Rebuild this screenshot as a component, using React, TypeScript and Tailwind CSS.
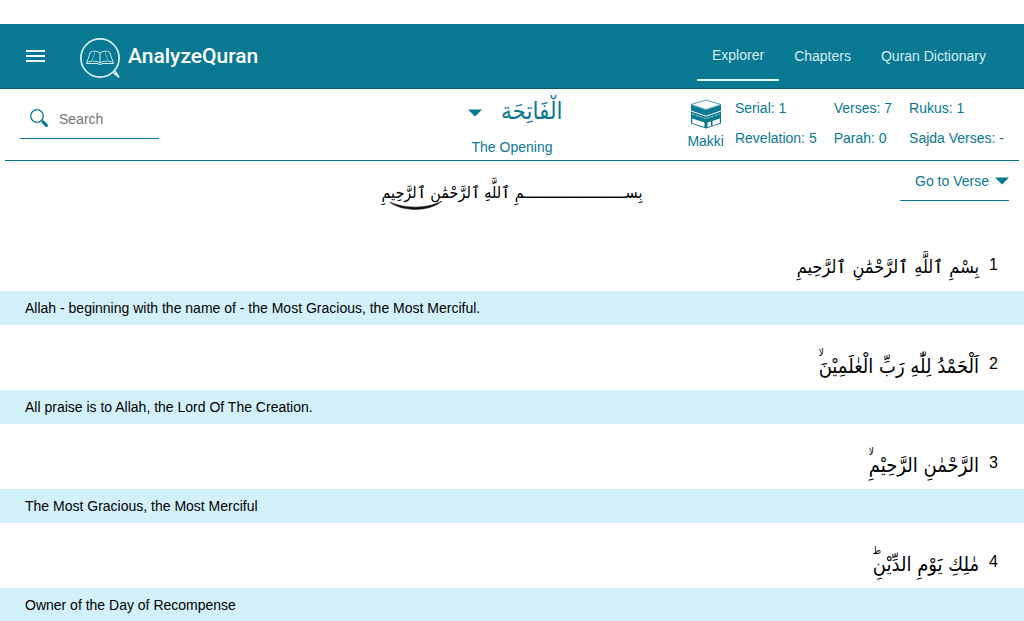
import React from "react";

const navLinks = [
  { label: "Chapters", href: "#chapters" },
  { label: "Quran Dictionary", href: "#dictionary" },
];

const facts = [
  "Serial: 1",
  "Verses: 7",
  "Rukus: 1",
  "Revelation: 5",
  "Parah: 0",
  "Sajda Verses: -",
];

const verses = [
  {
    id: 1,
    arabic: "بِسْمِ ٱللَّهِ ٱلرَّحْمَٰنِ ٱلرَّحِيمِ",
    size: "text-lg",
    english: "Allah - beginning with the name of - the Most Gracious, the Most Merciful.",
  },
  {
    id: 2,
    arabic: "اَلْحَمْدُ لِلّٰهِ رَبِّ الْعٰلَمِيْنَ",
    size: "text-xl",
    stop: "لا",
    english: "All praise is to Allah, the Lord Of The Creation.",
  },
  {
    id: 3,
    arabic: "الرَّحْمٰنِ الرَّحِيْمِ",
    size: "text-xl",
    stop: "لا",
    english: "The Most Gracious, the Most Merciful",
  },
  {
    id: 4,
    arabic: "مٰلِكِ يَوْمِ الدِّيْنِ",
    size: "text-xl",
    stop: "ط",
    english: "Owner of the Day of Recompense",
  },
];

function Logo() {
  return (
    <svg viewBox="0 0 42 42" className="mt-[6px] h-[42px] w-[42px]" fill="none" stroke="#d9eff5" aria-hidden="true">
      <circle cx="20" cy="20" r="19.1" strokeWidth="1.7" />
      <path d="M32.5 34 L39 39.3 L35 33" strokeWidth="1.6" />
      {/* open book */}
      <path d="M20 15 C17 12.8 13 12.8 10.5 14 L7 24 C12 23 17 22.5 20 25 C23 22.5 28 23 33 24 L29.5 14 C27 12.8 23 12.8 20 15 Z" strokeWidth="0.9" />
      <path d="M20 15 V25 M7 24 L6.5 25.5 H17 Q20 27.5 23 25.5 H33.5 L33 24" strokeWidth="1" />
      <path d="M12 22.5 L15 14.5 M28 22.5 L25 14.5" strokeWidth="0.5" />
    </svg>
  );
}

function SearchIcon() {
  return (
    <svg viewBox="0 0 20 20" className="h-5 w-5 shrink-0" fill="none" stroke="#087893" aria-hidden="true">
      <circle cx="8" cy="7" r="6.3" strokeWidth="1.3" />
      <path d="M12.3 11.3 L14.3 13.3" strokeWidth="1.6" />
      <path d="M14.2 13.2 L17.4 16.4" strokeWidth="3.2" strokeLinecap="round" />
    </svg>
  );
}

function KaabaIcon() {
  return (
    <svg viewBox="0 0 32 30" className="h-[30px] w-8" aria-hidden="true">
      <path d="M1 5.5 L16 1 L31 5.5 L16 10.5 Z" fill="#fff" stroke="#087893" strokeWidth="0.7" />
      <path d="M1 6 L16 11 L31 6 V24.5 L16 29.5 L1 24.5 Z" fill="#087893" />
      {/* embroidered band */}
      <path d="M1 12 L16 17.2 L31 12" fill="none" stroke="#fff" strokeWidth="1" />
      <path d="M2 14.8 L16 19.6 L30 14.8" fill="none" stroke="#fff" strokeWidth="0.6" strokeDasharray="3 1" />
      <path d="M2.2 19.5 L14.5 23.6 V28 L2.2 24 Z M29.8 19.5 L22.5 22 V26.4 L29.8 24 Z M21 22.5 L17.5 23.6 V28 L21 26.9 Z" fill="#fff" />
    </svg>
  );
}

function Caret() {
  return (
    <svg viewBox="0 0 14 8" className="h-2 w-[14px] shrink-0" fill="#087893" aria-hidden="true">
      <path d="M0 0.5 H14 L7 7.5 Z" />
    </svg>
  );
}

function Header() {
  return (
    <header className="flex h-[65px] items-center justify-between border-b border-[#075e74] bg-[#087893] pr-[38px] pl-[26px] text-[#d5edf3]">
      <div className="flex items-center">
        <button type="button" aria-label="Menu" className="flex h-5 w-5 flex-col justify-center gap-[3px]">
          <span className="h-[2px] w-[19px] bg-white" />
          <span className="h-[2px] w-[19px] bg-white" />
          <span className="h-[2px] w-[19px] bg-white" />
        </button>
        <a href="#home" className="ml-[34px] flex items-center gap-[6px]">
          <Logo />
          <span className="font-[Roboto,sans-serif] text-[21px] font-medium text-white">AnalyzeQuran</span>
        </a>
      </div>
      <nav className="flex h-full items-center gap-[30px]">
        <a href="#explorer" className="-mr-[15px] flex h-[50px] items-center border-b-2 border-[#e6f6fa] px-[15px]">
          Explorer
        </a>
        {navLinks.map((link) => (
          <a key={link.label} href={link.href}>
            {link.label}
          </a>
        ))}
      </nav>
    </header>
  );
}

function ChapterBar() {
  return (
    <section className="mx-[5px] grid h-[72px] grid-cols-[1fr_auto_1fr] border-b border-[#087893] text-[#087893]">
      <div className="pl-[15px]">
        <label className="mt-[10px] flex h-10 w-[139px] items-center gap-[10px] border-b border-[#087893] pl-[9px]">
          <SearchIcon />
          <input
            type="search"
            aria-label="Search"
            placeholder="Search"
            className="w-full min-w-0 bg-transparent outline-none placeholder:text-[#757575]"
          />
        </label>
      </div>

      <div className="flex flex-col items-center">
        <label className="flex h-12 items-center gap-[19px] pl-[6px]">
          <Caret />
          <select
            aria-label="Chapter"
            dir="rtl"
            className="h-10 appearance-none bg-transparent pb-1 font-['DejaVu_Sans_Condensed','DejaVu_Sans',sans-serif] text-2xl outline-none"
          >
            <option>الْفَاتِحَة</option>
          </select>
        </label>
        <h1 className="leading-5">The Opening</h1>
      </div>

      <div className="flex justify-end gap-[11px] pr-[15px]">
        <div className="flex flex-col items-center pt-[10px]">
          <KaabaIcon />
          <span className="mt-[2px] leading-5">Makki</span>
        </div>
        <ul className="grid grid-cols-[auto_auto_auto] content-start gap-x-[17px] gap-y-[10px] pt-[9px] leading-5 whitespace-nowrap">
          {facts.map((fact) => (
            <li key={fact}>{fact}</li>
          ))}
        </ul>
      </div>
    </section>
  );
}

function Bismillah() {
  return (
    <div className="grid h-[65px] grid-cols-[1fr_auto_1fr] items-start">
      <p
        dir="rtl"
        className="relative col-start-2 pt-3 font-['DejaVu_Sans_Condensed','DejaVu_Sans',sans-serif] text-base leading-10 whitespace-nowrap text-black"
      >
        بِســــــــــــــــــــــــمِ ٱللَّهِ ٱلرَّحْمَٰنِ ٱلرَّحِيمِ
        {/* long flourish under the last word */}
        <svg viewBox="0 0 52 10" className="absolute top-10 left-2 h-[10px] w-[52px]" aria-hidden="true">
          <path d="M0 1 C10 10 38 12 52 0 C38 8 14 8 0 1 Z" fill="#111" stroke="#111" strokeWidth="0.6" />
        </svg>
      </p>
      <label className="mr-[15px] flex h-10 items-center gap-[6px] justify-self-end border-b border-[#087893] pl-[15px] text-[#087893]">
        <select aria-label="Go to Verse" className="appearance-none bg-transparent outline-none">
          <option>Go to Verse</option>
          {verses.map((verse) => (
            <option key={verse.id}>{verse.id}</option>
          ))}
        </select>
        <Caret />
      </label>
    </div>
  );
}

export default function App() {
  return (
    <div className="min-h-screen overflow-hidden bg-white pt-6 font-['Liberation_Sans',Arial,sans-serif] text-sm text-black">
      <Header />
      <main>
        <ChapterBar />
        <Bismillah />
        <ol>
          {verses.map((verse) => (
            <li key={verse.id}>
              <div dir="rtl" className="flex h-[65px] items-center gap-[10px] px-[26px] pt-4">
                <span className="pb-1 text-base">{verse.id}</span>
                <p
                  lang="ar"
                  className={`relative font-['DejaVu_Sans_Condensed','DejaVu_Sans',sans-serif] ${verse.size}`}
                >
                  {verse.arabic}
                  {/* pause mark over the last letter */}
                  {verse.stop && (
                    <span className="absolute -top-1 left-0 text-[10px] leading-none">{verse.stop}</span>
                  )}
                </p>
              </div>
              <p className="bg-[#d3f1fb] px-[25px] py-[7px] leading-5">{verse.english}</p>
            </li>
          ))}
        </ol>
      </main>
    </div>
  );
}
